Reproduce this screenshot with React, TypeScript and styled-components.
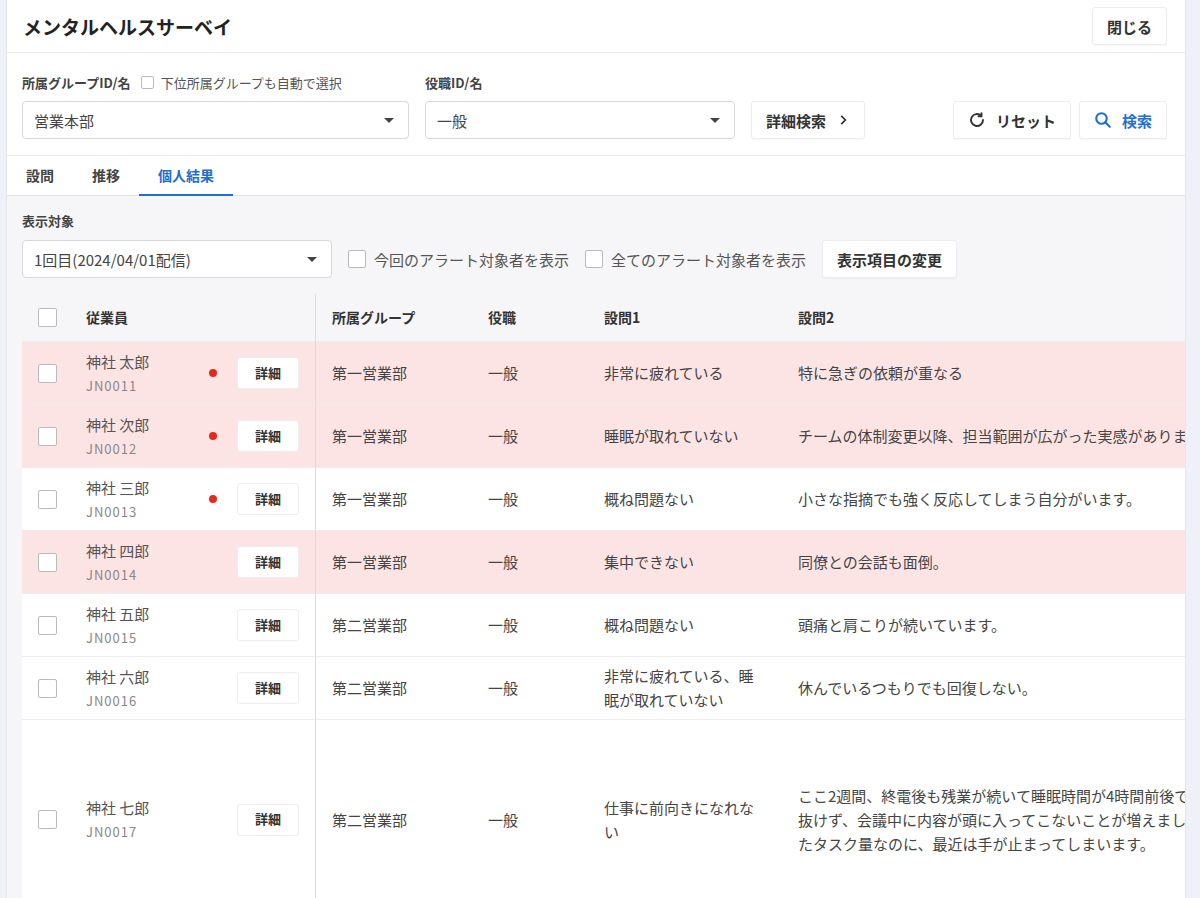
import React from "react";
import styled, { createGlobalStyle } from "styled-components";

const G = createGlobalStyle`
  html,body{margin:0;padding:0;background:#eef1f7;}
  body{font-family:"Noto Sans CJK JP","Noto Sans",sans-serif;color:#333;}
  #root{height:898px;overflow:hidden;}
`;
const Shell = styled.div`display:flex;height:898px;`;
const Panel = styled.div`margin-left:6px;width:1178px;flex:none;background:#fff;border-left:1px solid #e6e6ea;border-right:1px solid #e6e6ea;display:flex;flex-direction:column;overflow:hidden;`;
const Header = styled.div`height:52px;flex:none;display:flex;align-items:center;justify-content:space-between;padding:0 18px 0 16px;border-bottom:1px solid #e8e8ec;`;
const Title = styled.h1`margin:0;font-size:19px;font-weight:700;color:#222;`;
const Btn = styled.button<{ $blue?: boolean }>`height:38px;padding:0 14px;display:flex;align-items:center;gap:10px;background:#fff;border:1px solid #ececf0;border-radius:3px;font-family:inherit;font-size:15px;font-weight:700;color:${p => p.$blue ? "#1f6fd1" : "#333"};box-shadow:0 1px 2px rgba(0,0,0,.04);`;
const Filters = styled.div`flex:none;padding:19px 18px 16px 15px;display:flex;align-items:flex-end;gap:16px;border-bottom:1px solid #e8e8ec;`;
const Field = styled.div`display:flex;flex-direction:column;gap:9px;`;
const Label = styled.div`display:flex;align-items:center;gap:10px;font-size:13px;font-weight:700;color:#444;height:20px;flex:none;`;
const Sub = styled.span`display:flex;align-items:center;gap:7px;font-weight:400;color:#555;`;
const Box = styled.span<{ $s?: number }>`display:inline-block;width:${p => p.$s || 13}px;height:${p => p.$s || 13}px;border:1px solid #bbb;border-radius:2px;background:#fff;box-sizing:border-box;flex:none;`;
const Select = styled.div<{ $w: number }>`width:${p => p.$w}px;height:38px;box-sizing:border-box;border:1px solid #d8d8dc;border-radius:4px;padding:0 14px 0 11px;display:flex;align-items:center;justify-content:space-between;font-size:15px;color:#444;background:#fff;`;
const Caret = styled.span`width:0;height:0;border-left:5px solid transparent;border-right:5px solid transparent;border-top:5px solid #444;`;
const Spacer = styled.div`flex:1;`;
const BtnGroup = styled.div`display:flex;gap:8px;`;
const Tabs = styled.div`flex:none;display:flex;height:40px;box-sizing:border-box;border-bottom:1px solid #e2e2e6;padding-left:0;`;
const Tab = styled.div<{ $on?: boolean }>`padding:0 19px;display:flex;align-items:center;font-size:14px;font-weight:700;color:${p => p.$on ? "#1f6fd1" : "#444"};border-bottom:2px solid ${p => p.$on ? "#1f6fd1" : "transparent"};margin-bottom:-1px;`;
const Body = styled.div`flex:1;background:#f6f6f8;padding:14px 0 0 15px;display:flex;flex-direction:column;`;
const Controls = styled.div`display:flex;align-items:center;gap:16px;margin-top:10px;margin-bottom:16px;`;
const Check = styled.label`display:flex;align-items:center;gap:8px;font-size:15px;color:#555;`;
const Table = styled.div`display:grid;grid-template-columns:48px 246px 156px 116px 194px 620px;background:#fff;width:1380px;`;
const Cell = styled.div<{ $bg?: string; $h?: number; $head?: boolean; $div?: boolean }>`height:${p => p.$h || 63}px;box-sizing:border-box;display:flex;align-items:center;padding:0 16px;font-size:${p => p.$head ? 14 : 15}px;font-weight:${p => p.$head ? 700 : 400};color:${p => p.$head ? "#333" : "#444"};background:${p => p.$bg};border-bottom:1px solid #ececf0;${p => p.$div ? "border-right:1px solid #dcdce0;" : ""}white-space:nowrap;overflow:hidden;line-height:1.6;`;
const Wrap = styled.span<{ $w?: number }>`white-space:normal;${p => p.$w ? `width:${p.$w}px;` : ""}`;
const Emp = styled.div`flex:1;display:flex;flex-direction:column;gap:2px;`;
const Name = styled.span`font-size:15px;color:#555;`;
const Code = styled.span`font-size:13px;color:#888;letter-spacing:1px;`;
const Dot = styled.span<{ $show: boolean }>`width:8px;height:8px;border-radius:50%;background:${p => p.$show ? "#e8281f" : "transparent"};margin-right:20px;`;
const Detail = styled.span`width:60px;height:30px;display:flex;align-items:center;justify-content:center;background:#fff;border:1px solid #eee;border-radius:3px;font-size:13px;font-weight:700;color:#333;`;

const rows = [
  { n: "神社 太郎", c: "JN0011", a: true, pink: true, g: "第一営業部", q1: "非常に疲れている", q2: "特に急ぎの依頼が重なる" },
  { n: "神社 次郎", c: "JN0012", a: true, pink: true, g: "第一営業部", q1: "睡眠が取れていない", q2: "チームの体制変更以降、担当範囲が広がった実感があります。" },
  { n: "神社 三郎", c: "JN0013", a: true, pink: false, g: "第一営業部", q1: "概ね問題ない", q2: "小さな指摘でも強く反応してしまう自分がいます。" },
  { n: "神社 四郎", c: "JN0014", a: false, pink: true, g: "第一営業部", q1: "集中できない", q2: "同僚との会話も面倒。" },
  { n: "神社 五郎", c: "JN0015", a: false, pink: false, g: "第二営業部", q1: "概ね問題ない", q2: "頭痛と肩こりが続いています。" },
  { n: "神社 六郎", c: "JN0016", a: false, pink: false, g: "第二営業部", q1: "非常に疲れている、睡眠が取れていない", q2: "休んでいるつもりでも回復しない。" },
  { n: "神社 七郎", c: "JN0017", a: false, pink: false, g: "第二営業部", q1: "仕事に前向きになれない", q2: "ここ2週間、終電後も残業が続いて睡眠時間が4時間前後です。休日に寝ても疲れが抜けず、会議中に内容が頭に入ってこないことが増えました。以前は乗り切れていたタスク量なのに、最近は手が止まってしまいます。", h: 200 },
];

export default function App() {
  return (
    <Shell>
      <G />
      <Panel>
        <Header>
          <Title>メンタルヘルスサーベイ</Title>
          <Btn>閉じる</Btn>
        </Header>
        <Filters>
          <Field>
            <Label>所属グループID/名<Sub><Box />下位所属グループも自動で選択</Sub></Label>
            <Select $w={387}>営業本部<Caret /></Select>
          </Field>
          <Field>
            <Label>役職ID/名</Label>
            <Select $w={310}>一般<Caret /></Select>
          </Field>
          <Btn>詳細検索
            <svg width="14" height="14" viewBox="0 0 24 24" fill="none" stroke="#333" strokeWidth="3"><path d="M9 5l7 7-7 7" /></svg>
          </Btn>
          <Spacer />
          <BtnGroup>
            <Btn>
              <svg width="18" height="18" viewBox="0 0 24 24" fill="none" stroke="#333" strokeWidth="2.6" strokeLinecap="round"><path d="M20 12a8 8 0 1 1-2.6-5.9" /><path d="M18 3v4h-4" /></svg>
              リセット
            </Btn>
            <Btn $blue>
              <svg width="18" height="18" viewBox="0 0 24 24" fill="none" stroke="#1f6fd1" strokeWidth="2.8" strokeLinecap="round"><circle cx="10" cy="10" r="7" /><path d="M15 15l6 6" /></svg>
              検索
            </Btn>
          </BtnGroup>
        </Filters>
        <Tabs>
          <Tab>設問</Tab><Tab>推移</Tab><Tab $on>個人結果</Tab>
        </Tabs>
        <Body>
          <Label>表示対象</Label>
          <Controls>
            <Select $w={310}>1回目(2024/04/01配信)<Caret /></Select>
            <Check><Box $s={18} />今回のアラート対象者を表示</Check>
            <Check><Box $s={18} />全てのアラート対象者を表示</Check>
            <Btn>表示項目の変更</Btn>
          </Controls>
          <Table>
            <Cell $head $h={48} $bg="#f6f6f8"><Box $s={19} /></Cell>
            <Cell $head $h={48} $bg="#f6f6f8" $div>従業員</Cell>
            <Cell $head $h={48} $bg="#f6f6f8">所属グループ</Cell>
            <Cell $head $h={48} $bg="#f6f6f8">役職</Cell>
            <Cell $head $h={48} $bg="#f6f6f8">設問1</Cell>
            <Cell $head $h={48} $bg="#f6f6f8">設問2</Cell>
            {rows.map(r => {
              const bg = r.pink ? "#fde4e4" : "#fff";
              const h = r.h || 63;
              return (
                <React.Fragment key={r.c}>
                  <Cell $bg={bg} $h={h}><Box $s={19} /></Cell>
                  <Cell $bg={bg} $h={h} $div>
                    <Emp><Name>{r.n}</Name><Code>{r.c}</Code></Emp>
                    <Dot $show={r.a} />
                    <Detail>詳細</Detail>
                  </Cell>
                  <Cell $bg={bg} $h={h}>{r.g}</Cell>
                  <Cell $bg={bg} $h={h}>一般</Cell>
                  <Cell $bg={bg} $h={h}><Wrap>{r.q1}</Wrap></Cell>
                  <Cell $bg={bg} $h={h}>{r.h ? <Wrap $w={560}>{r.q2}</Wrap> : r.q2}</Cell>
                </React.Fragment>
              );
            })}
          </Table>
        </Body>
      </Panel>
    </Shell>
  );
}
